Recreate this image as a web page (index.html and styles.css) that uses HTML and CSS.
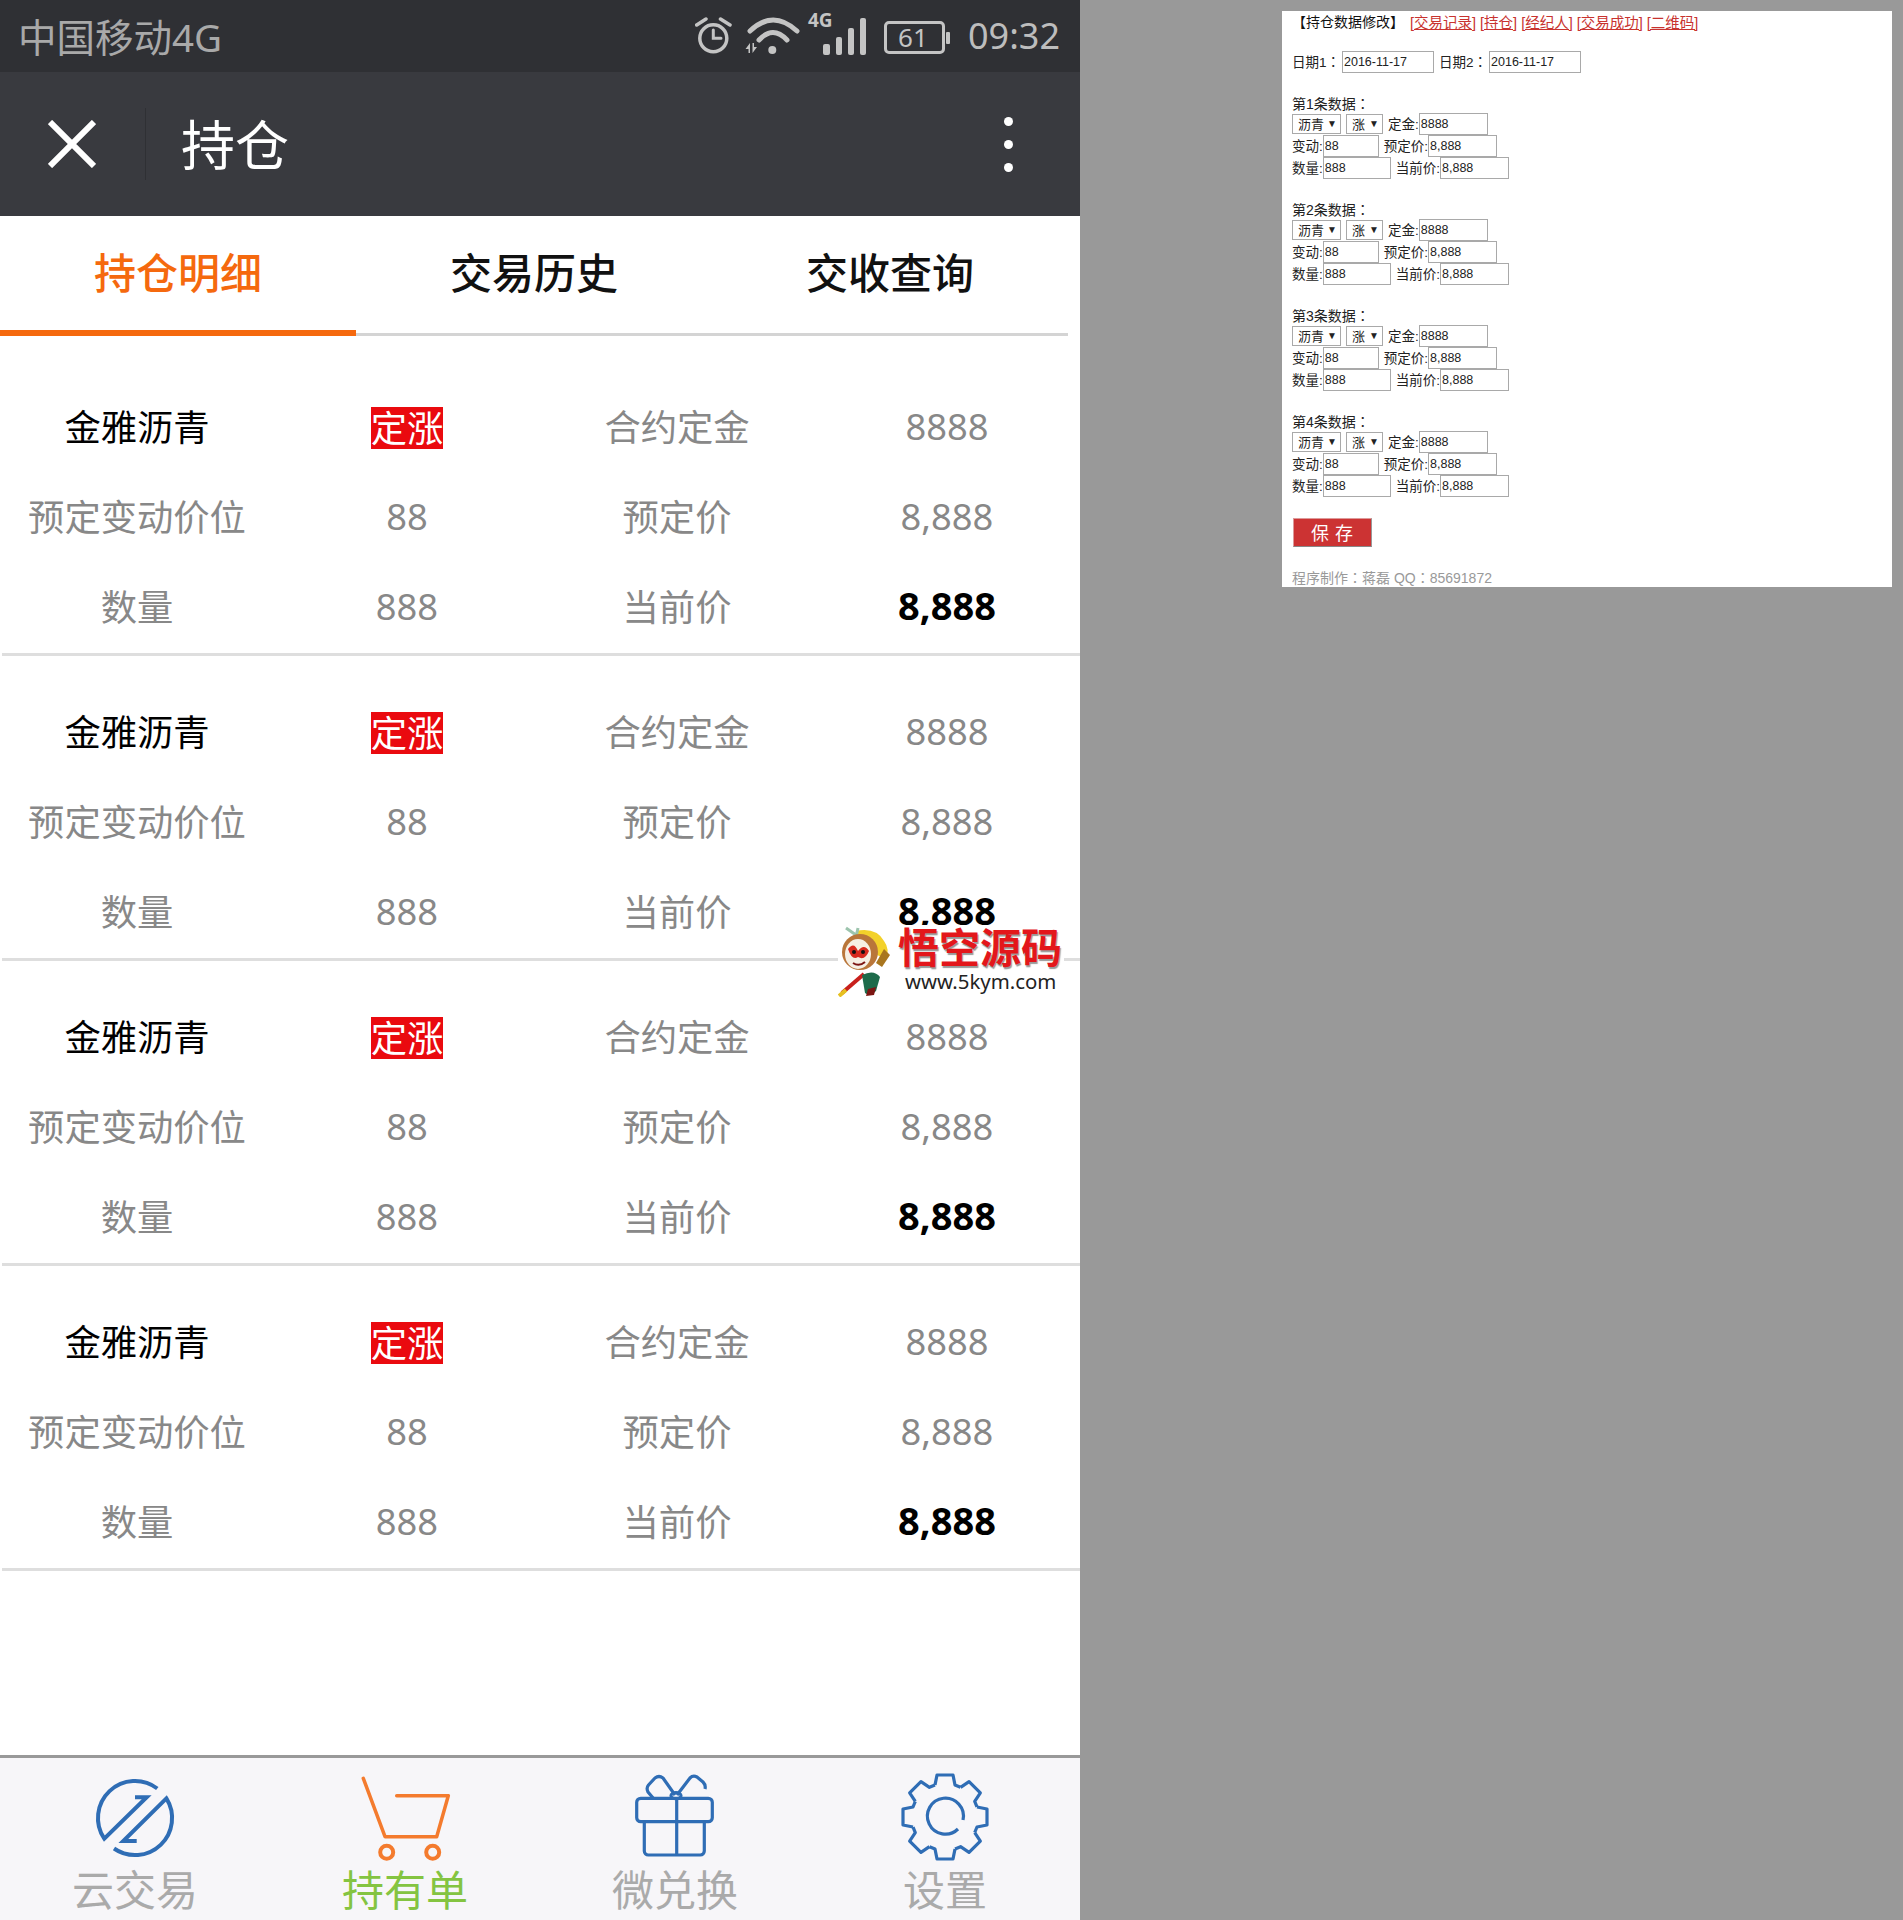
FILE: index.html
```html
<!DOCTYPE html>
<html lang="zh-CN">
<head>
    <meta charset="UTF-8">
    <meta name="viewport" content="width=device-width, initial-scale=1.0">
    <title>持仓</title>
    <link rel="stylesheet" href="styles.css">
</head>
<body>
    <div class="phone">
        <div class="status-bar">
            <span class="carrier">中国移动4G</span>
            <div class="status-icons">
                <svg class="ic-alarm" width="40" height="40" viewBox="0 0 40 40" fill="none" stroke="#c4c4c4" stroke-linecap="round">
                    <circle cx="18.3" cy="24.3" r="13.5" stroke-width="3.5"/>
                    <path d="M18.3 16V24.3H26" stroke-width="3"/>
                    <path d="M1.7 11L11 5M25.5 5L35 11" stroke-width="3.5"/>
                </svg>
                <svg class="ic-wifi" width="55" height="44" viewBox="0 0 55 44" fill="none" stroke="#c4c4c4" stroke-linecap="round">
                    <path d="M5 17Q28 -5 52 17" stroke-width="5"/>
                    <path d="M14 26Q28 11 42 26" stroke-width="5"/>
                    <circle cx="27.3" cy="36" r="4" fill="#c4c4c4" stroke="none"/>
                    <path d="M5 29L.5 35H3.5V39H5ZM7.5 29V39L12 33H9V29Z" fill="#c4c4c4" stroke="none"/>
                </svg>
                <div class="ic-signal">
                    <span class="ic-4g">4G</span>
                    <svg width="60" height="48" viewBox="0 0 60 48" fill="#c4c4c4">
                        <rect x="15" y="34" width="7" height="11" rx="2"/>
                        <rect x="28" y="27" width="6" height="18" rx="2"/>
                        <rect x="40" y="18" width="6" height="27" rx="2"/>
                        <rect x="52" y="8" width="6" height="37" rx="2"/>
                    </svg>
                </div>
                <div class="ic-battery">
                    <span class="battery-body">61</span>
                    <span class="battery-cap"></span>
                </div>
                <span class="clock">09:32</span>
            </div>
        </div>

        <div class="title-bar">
            <svg class="close-icon" width="48" height="48" viewBox="0 0 48 48" stroke="#fff" stroke-width="6">
                <path d="M2 2L46 46M46 2L2 46"/>
            </svg>
            <span class="title-sep"></span>
            <span class="title-text">持仓</span>
            <span class="more-dots"><i></i><i></i><i></i></span>
        </div>

        <div class="tabs">
            <div class="tab active">持仓明细</div>
            <div class="tab">交易历史</div>
            <div class="tab">交收查询</div>
        </div>

        <div class="list">
            <div class="item">
                <div class="cell name">金雅沥青</div>
                <div class="cell"><span class="badge">定涨</span></div>
                <div class="cell">合约定金</div>
                <div class="cell num">8888</div>
                <div class="cell">预定变动价位</div>
                <div class="cell num">88</div>
                <div class="cell">预定价</div>
                <div class="cell num">8,888</div>
                <div class="cell">数量</div>
                <div class="cell num">888</div>
                <div class="cell">当前价</div>
                <div class="cell price">8,888</div>
            </div>
            <div class="item">
                <div class="cell name">金雅沥青</div>
                <div class="cell"><span class="badge">定涨</span></div>
                <div class="cell">合约定金</div>
                <div class="cell num">8888</div>
                <div class="cell">预定变动价位</div>
                <div class="cell num">88</div>
                <div class="cell">预定价</div>
                <div class="cell num">8,888</div>
                <div class="cell">数量</div>
                <div class="cell num">888</div>
                <div class="cell">当前价</div>
                <div class="cell price">8,888</div>
            </div>
            <div class="item">
                <div class="cell name">金雅沥青</div>
                <div class="cell"><span class="badge">定涨</span></div>
                <div class="cell">合约定金</div>
                <div class="cell num">8888</div>
                <div class="cell">预定变动价位</div>
                <div class="cell num">88</div>
                <div class="cell">预定价</div>
                <div class="cell num">8,888</div>
                <div class="cell">数量</div>
                <div class="cell num">888</div>
                <div class="cell">当前价</div>
                <div class="cell price">8,888</div>
            </div>
            <div class="item">
                <div class="cell name">金雅沥青</div>
                <div class="cell"><span class="badge">定涨</span></div>
                <div class="cell">合约定金</div>
                <div class="cell num">8888</div>
                <div class="cell">预定变动价位</div>
                <div class="cell num">88</div>
                <div class="cell">预定价</div>
                <div class="cell num">8,888</div>
                <div class="cell">数量</div>
                <div class="cell num">888</div>
                <div class="cell">当前价</div>
                <div class="cell price">8,888</div>
            </div>
        </div>

        <div class="bottom-nav">
            <div class="nav-item">
                <svg width="90" height="90" viewBox="0 0 90 90" fill="none" stroke="#2f6db5" stroke-width="4">
                    <path d="M67.3 16.5A37 37 0 0 0 14.3 66.7L56.7 25.3H45"/>
                    <path d="M46.7 69H33.3L76.4 26.4A37 37 0 0 1 24 76.5"/>
                </svg>
                <span>云交易</span>
            </div>
            <div class="nav-item current">
                <svg width="100" height="90" viewBox="0 0 100 90" fill="none" stroke="#f47b2e" stroke-width="3.5" stroke-linejoin="round" stroke-linecap="round">
                    <path d="M8.3 6.3L30 64.7H81.7L93.3 23.7H41.7"/>
                    <circle cx="31.7" cy="80.3" r="6.5" stroke-width="4"/>
                    <circle cx="77.7" cy="80.3" r="6.5" stroke-width="4"/>
                </svg>
                <span>持有单</span>
            </div>
            <div class="nav-item">
                <svg width="90" height="90" viewBox="0 0 90 90" fill="none" stroke="#2f6db5" stroke-width="3.2" stroke-linejoin="round">
                    <rect x="6.7" y="26.3" width="75.6" height="23.4" rx="4"/>
                    <path d="M14.3 49.7V79A4 4 0 0 0 18.3 83H70.3A4 4 0 0 0 74.3 79V49.7"/>
                    <path d="M46.7 26V83"/>
                    <path d="M45 23L33 6Q29 3 25 6L18.5 13Q16 16 18 20L23.3 26.3"/>
                    <path d="M47 23L60 6Q63 3 67 5L73 10Q76 13 75 17"/>
                    <ellipse cx="46" cy="23.7" rx="5" ry="3"/>
                </svg>
                <span>微兑换</span>
            </div>
            <div class="nav-item">
                <svg width="90" height="90" viewBox="-45 -45 90 90" fill="none" stroke="#2f6db5" stroke-width="3.2" stroke-linejoin="round">
                    <path id="tooth" d="M-10 -32L-8 -42H8L10 -32L15.5 -29.7"/>
                    <use href="#tooth" transform="rotate(45)"/>
                    <use href="#tooth" transform="rotate(90)"/>
                    <use href="#tooth" transform="rotate(135)"/>
                    <use href="#tooth" transform="rotate(180)"/>
                    <use href="#tooth" transform="rotate(225)"/>
                    <use href="#tooth" transform="rotate(270)"/>
                    <use href="#tooth" transform="rotate(315)"/>
                    <path d="M18 3A18 18 0 1 0 13 12"/>
                </svg>
                <span>设置</span>
            </div>
        </div>

        <div class="watermark">
            <svg class="monkey" width="60" height="72" viewBox="0 0 60 72">
                <path d="M4 68L26 49" stroke="#c8201c" stroke-width="4"/>
                <path d="M1 71L8 65" stroke="#e6c020" stroke-width="4"/>
                <path d="M24 50Q36 44 42 52L38 66Q32 72 27 68Z" fill="#1d6b4a"/>
                <path d="M30 64L38 62L36 70L28 71Z" fill="#7c1512"/>
                <path d="M18 6Q38 2 46 16Q52 24 48 34L30 26Z" fill="#f3d12a"/>
                <path d="M46 24L52 30L44 42L38 38Z" fill="#a9761f"/>
                <path d="M8 3L18 10M20 3L18 12" stroke="#9cc4ad" stroke-width="3"/>
                <circle cx="22" cy="27" r="18" fill="#b9763a"/>
                <ellipse cx="20" cy="29" rx="13" ry="15" fill="#f6efe4"/>
                <path d="M10 24Q16 16 20 26Q26 18 31 26Q27 36 20 32Q14 36 10 24Z" fill="#d72a1f"/>
                <circle cx="16" cy="27" r="2" fill="#111"/>
                <circle cx="25" cy="27" r="2" fill="#111"/>
                <path d="M15 38Q21 42 27 37" stroke="#7c1512" stroke-width="2" fill="none"/>
            </svg>
            <div class="wm-text">
                <div class="wm-name">悟空源码</div>
                <div class="wm-url">www.5kym.com</div>
            </div>
        </div>
    </div>

    <div class="panel" lang="zh-TW">
        <div class="panel-head">
            <span class="panel-title">【持仓数据修改】</span>
            <a href="#">[交易记录]</a>
            <a href="#">[持仓]</a>
            <a href="#">[经纪人]</a>
            <a href="#">[交易成功]</a>
            <a href="#">[二维码]</a>
        </div>
        <div class="row dates">
            <label>日期1：</label><input class="w-date" value="2016-11-17">
            <label class="next">日期2：</label><input class="w-date" value="2016-11-17">
        </div>

        <div class="block">
            <div class="block-title">第1条数据：</div>
            <div class="row">
                <span class="sel"><select class="w-sel1"><option>沥青</option></select></span>
                <span class="sel next"><select class="w-sel2"><option>涨</option></select></span>
                <label class="next">定金:</label><input class="w-69" value="8888">
            </div>
            <div class="row">
                <label>变动:</label><input class="w-56" value="88">
                <label class="next">预定价:</label><input class="w-69" value="8,888">
            </div>
            <div class="row">
                <label>数量:</label><input class="w-68" value="888">
                <label class="next">当前价:</label><input class="w-69" value="8,888">
            </div>
        </div>
        <div class="block">
            <div class="block-title">第2条数据：</div>
            <div class="row">
                <span class="sel"><select class="w-sel1"><option>沥青</option></select></span>
                <span class="sel next"><select class="w-sel2"><option>涨</option></select></span>
                <label class="next">定金:</label><input class="w-69" value="8888">
            </div>
            <div class="row">
                <label>变动:</label><input class="w-56" value="88">
                <label class="next">预定价:</label><input class="w-69" value="8,888">
            </div>
            <div class="row">
                <label>数量:</label><input class="w-68" value="888">
                <label class="next">当前价:</label><input class="w-69" value="8,888">
            </div>
        </div>
        <div class="block">
            <div class="block-title">第3条数据：</div>
            <div class="row">
                <span class="sel"><select class="w-sel1"><option>沥青</option></select></span>
                <span class="sel next"><select class="w-sel2"><option>涨</option></select></span>
                <label class="next">定金:</label><input class="w-69" value="8888">
            </div>
            <div class="row">
                <label>变动:</label><input class="w-56" value="88">
                <label class="next">预定价:</label><input class="w-69" value="8,888">
            </div>
            <div class="row">
                <label>数量:</label><input class="w-68" value="888">
                <label class="next">当前价:</label><input class="w-69" value="8,888">
            </div>
        </div>
        <div class="block">
            <div class="block-title">第4条数据：</div>
            <div class="row">
                <span class="sel"><select class="w-sel1"><option>沥青</option></select></span>
                <span class="sel next"><select class="w-sel2"><option>涨</option></select></span>
                <label class="next">定金:</label><input class="w-69" value="8888">
            </div>
            <div class="row">
                <label>变动:</label><input class="w-56" value="88">
                <label class="next">预定价:</label><input class="w-69" value="8,888">
            </div>
            <div class="row">
                <label>数量:</label><input class="w-68" value="888">
                <label class="next">当前价:</label><input class="w-69" value="8,888">
            </div>
        </div>

        <button class="save" type="button">保 存</button>
        <div class="credit">程序制作：蒋磊 QQ：85691872</div>
    </div>
</body>
</html>
```

FILE: styles.css
```css
body {
    margin: 0;
    width: 1903px;
    height: 1920px;
    display: flex;
    align-items: flex-start;
    background-color: #999;
    font-family: "Noto Sans", "Noto Sans CJK SC", sans-serif;
    overflow: hidden;
}

/* phone screenshot */
.phone {
    position: relative;
    width: 1080px;
    height: 1920px;
    display: flex;
    flex-direction: column;
    background-color: #fff;
}

.status-bar {
    height: 72px;
    padding: 0 20px 0 18px;
    display: flex;
    align-items: center;
    justify-content: space-between;
    background-color: #2f3034;
}

.carrier {
    padding-top: 2px;
    font-size: 38.5px;
    line-height: 70px;
    color: #a9a9a9;
}

.status-icons {
    display: flex;
    align-items: flex-start;
    height: 72px;
}

.ic-alarm {
    margin-top: 14px;
}

.ic-wifi {
    margin: 14px 0 0 10px;
}

.ic-signal {
    position: relative;
    height: 48px;
    margin: 10px 0 0 8px;
}

.ic-4g {
    position: absolute;
    left: 0;
    top: 2px;
    font-size: 19px;
    font-weight: 700;
    line-height: 17px;
    color: #c4c4c4;
}

.ic-battery {
    display: flex;
    align-items: center;
    gap: 1px;
    margin: 21px 0 0 16px;
}

.battery-body {
    box-sizing: border-box;
    width: 61px;
    height: 33px;
    padding-right: 3px;
    border: 3px solid #c4c4c4;
    border-radius: 5px;
    text-align: center;
    font-size: 26px;
    line-height: 27px;
    color: #c4c4c4;
}

.battery-cap {
    width: 4px;
    height: 12px;
    border-radius: 1px;
    background-color: #c4c4c4;
}

.clock {
    margin-left: 18px;
    font-size: 36px;
    line-height: 72px;
    color: #bdbdbd;
}

.title-bar {
    height: 144px;
    display: flex;
    align-items: center;
    background-color: #393a3f;
}

.close-icon {
    margin-left: 48px;
}

.title-sep {
    width: 1px;
    height: 72px;
    margin-left: 49px;
    background-color: #2f3034;
}

.title-text {
    margin-left: 35px;
    padding-top: 2px;
    font-size: 54px;
    line-height: 72px;
    color: #fff;
}

.more-dots {
    margin-left: auto;
    margin-right: 67px;
    display: flex;
    flex-direction: column;
    gap: 14px;
}

.more-dots i {
    display: block;
    width: 9px;
    height: 9px;
    border-radius: 50%;
    background-color: #fff;
}

.tabs {
    height: 120px;
    width: 1068px;
    display: flex;
}

.tab {
    flex: 1;
    box-sizing: border-box;
    height: 120px;
    border-bottom: 3px solid #d4d4d4;
    text-align: center;
    font-size: 42px;
    font-weight: 500;
    line-height: 114px;
    color: #111;
}

.tab.active {
    border-bottom: 6px solid #f5690e;
    color: #f5690e;
}

.list {
    flex: 1;
    padding-top: 15px;
}

.item {
    display: grid;
    grid-template-columns: repeat(4, 270px);
    grid-auto-rows: 90px;
    margin-left: 2px;
    padding: 31px 0 1px;
    border-bottom: 3px solid #dedede;
}

.cell {
    text-align: center;
    font-size: 36.3px;
    line-height: 90px;
    color: #888;
}

.cell.num {
    line-height: 88px;
}

.cell.name {
    color: #000;
}

.cell.price {
    font-size: 38px;
    font-weight: 700;
    line-height: 87px;
    color: #000;
}

.badge {
    display: inline-block;
    height: 42px;
    margin-bottom: 6px;
    line-height: 42px;
    background-color: #ea0a0f;
    color: #fff;
    vertical-align: middle;
}

.bottom-nav {
    height: 165px;
    display: grid;
    grid-template-columns: repeat(4, 270px);
    padding-top: 14px;
    box-sizing: border-box;
    border-top: 3px solid #999;
    background-color: #f7f6f9;
}

.nav-item {
    display: flex;
    flex-direction: column;
    align-items: center;
    font-size: 42px;
    line-height: 56px;
    color: #aaa;
}

.nav-item.current {
    color: #84c441;
}

/* site watermark, lies over the list */
.watermark {
    position: absolute;
    left: 838px;
    top: 925px;
    width: 226px;
    height: 72px;
    display: flex;
    background-color: #fff;
}

.wm-name {
    font-size: 41px;
    font-weight: 700;
    line-height: 44px;
    color: #e3171b;
    text-shadow: 1px 2px 1px #999;
}

.wm-url {
    margin-left: 7px;
    font-size: 20.4px;
    line-height: 24px;
    color: #222;
}

/* admin form */
.panel {
    box-sizing: border-box;
    width: 610px;
    height: 576px;
    margin: 11px 0 0 202px;
    padding-left: 10px;
    background-color: #fff;
    font-family: "Liberation Sans", "Noto Sans CJK TC", sans-serif;
    font-size: 14px;
    color: #222;
}

.panel-head {
    height: 20px;
    display: flex;
    align-items: center;
    gap: 4px;
}

.panel-title {
    margin-right: 2px;
    color: #111;
}

.panel-head a {
    font-size: 14.5px;
    color: #c8332f;
}

.row {
    display: flex;
    align-items: center;
    height: 22px;
}

.row label {
    padding-bottom: 2px;
    font-size: 13.5px;
}

.dates {
    margin-top: 20px;
}

.next {
    margin-left: 5px;
}

.dates input {
    margin-left: 2px;
}

.block {
    margin-top: 22px;
}

.block-title {
    line-height: 18px;
}

input {
    box-sizing: border-box;
    height: 22px;
    padding: 0 1px;
    border: 1px solid #a9a9a9;
    font-family: "Liberation Sans", sans-serif;
    font-size: 12.5px;
    color: #222;
}

.w-date {
    width: 92px;
}

.w-56 {
    width: 56px;
}

.w-68 {
    width: 68px;
}

.w-69 {
    width: 69px;
}

.sel {
    position: relative;
    display: inline-flex;
}

.sel::after {
    content: "▼";
    position: absolute;
    right: 4px;
    top: 4px;
    font-size: 10px;
    line-height: 11px;
    color: #222;
}

select {
    appearance: none;
    box-sizing: border-box;
    height: 20px;
    padding: 0 0 0 5px;
    border: 1px solid #a9a9a9;
    border-radius: 0;
    background-color: #fff;
    font-family: "Liberation Sans", "Noto Sans CJK TC", sans-serif;
    font-size: 13px;
    color: #222;
}

.w-sel1 {
    width: 49px;
}

.w-sel2 {
    width: 37px;
}

.save {
    display: block;
    box-sizing: border-box;
    width: 79px;
    height: 29px;
    margin: 21px 0 0 1px;
    padding: 0 0 5px;
    border: 1px solid #d99;
    border-bottom-color: #888;
    border-right-color: #999;
    background-color: #cc3333;
    font-family: "Noto Sans CJK SC", sans-serif;
    font-size: 18px;
    letter-spacing: 1px;
    color: #fff;
}

.credit {
    margin-top: 22px;
    line-height: 18px;
    color: #999;
}
```
